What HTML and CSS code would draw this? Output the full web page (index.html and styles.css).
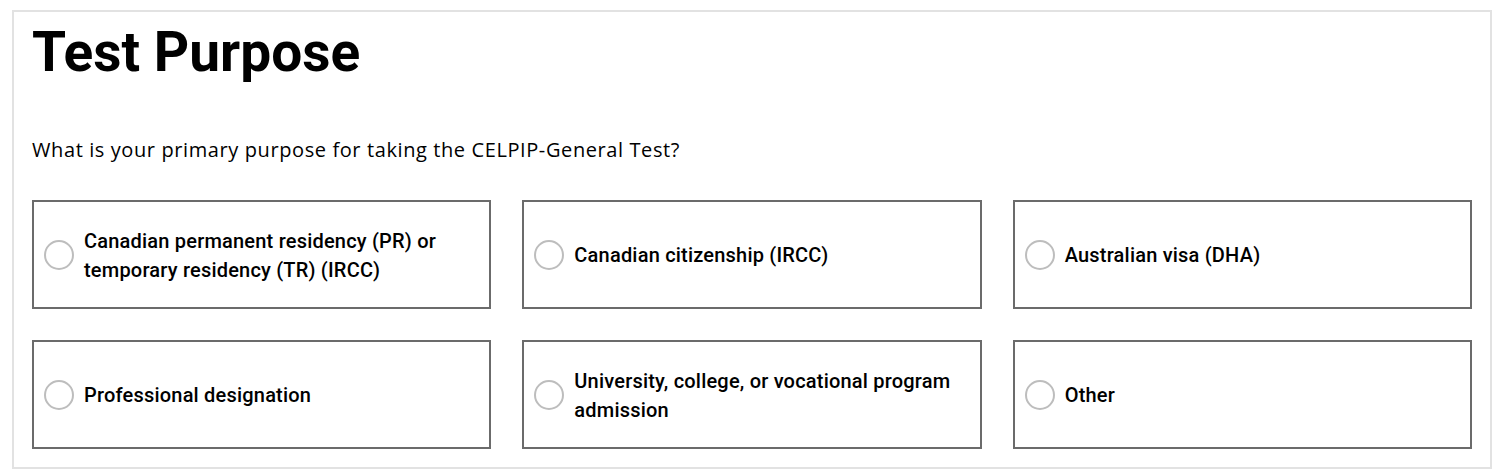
FILE: index.html
```html
<!DOCTYPE html>
<html lang="en">
<head>
<meta charset="UTF-8">
<meta name="viewport" content="width=device-width, initial-scale=1.0">
<title>Test Purpose</title>
<link rel="stylesheet" href="styles.css">
</head>
<body>

<div class="container">
    <h1>Test Purpose</h1>

    <p class="question">What is your primary purpose for taking the CELPIP-General Test?</p>

    <div class="options">
        <label class="option">
            <input type="radio" name="purpose" value="pr">
            <span class="radio"></span>
            <span class="text">Canadian permanent residency (PR) or temporary residency (TR) (IRCC)</span>
        </label>
        <label class="option">
            <input type="radio" name="purpose" value="citizenship">
            <span class="radio"></span>
            <span class="text">Canadian citizenship (IRCC)</span>
        </label>
        <label class="option">
            <input type="radio" name="purpose" value="australia">
            <span class="radio"></span>
            <span class="text">Australian visa (DHA)</span>
        </label>
        <label class="option">
            <input type="radio" name="purpose" value="professional">
            <span class="radio"></span>
            <span class="text">Professional designation</span>
        </label>
        <label class="option">
            <input type="radio" name="purpose" value="school">
            <span class="radio"></span>
            <span class="text">University, college, or vocational program admission</span>
        </label>
        <label class="option">
            <input type="radio" name="purpose" value="other">
            <span class="radio"></span>
            <span class="text">Other</span>
        </label>
    </div>
</div>

</body>
</html>
```

FILE: styles.css
```css
body {
    font-family: "Open Sans", Arial, sans-serif;
    background-color: #fff;
    color: #000;
    margin: 0;
    padding: 10px 0 0 12px;
}

.container {
    width: 1480px;
    box-sizing: border-box;
    border: 2px solid #e2e2e2;
    padding: 0 18px 18px;
}

h1 {
    font-family: Roboto, Arial, sans-serif;
    font-weight: 700;
    font-size: 55px;
    line-height: 64px;
    margin: 8px 0 0;
}

.question {
    font-size: 20px;
    letter-spacing: 0.6px;
    line-height: 28px;
    margin: 52px 0 36px;
}

.options {
    display: grid;
    grid-template-columns: repeat(3, 1fr);
    gap: 31px;
}

.option {
    display: flex;
    align-items: center;
    gap: 10px;
    height: 109px;
    box-sizing: border-box;
    border: 2px solid #6b6b6b;
    padding: 0 20px 0 10px;
    cursor: pointer;
}

.option input {
    display: none;
}

.radio {
    flex: none;
    width: 26px;
    height: 26px;
    border: 2px solid #bdbdbd;
    border-radius: 50%;
}

.option input:checked + .radio {
    border-color: #007bff;
    box-shadow: inset 0 0 0 6px #fff;
    background-color: #007bff;
}

.text {
    font-family: Roboto, Arial, sans-serif;
    font-weight: 500;
    font-size: 20px;
    letter-spacing: 0.2px;
    line-height: 29px;
    padding-top: 2px;
}
```
